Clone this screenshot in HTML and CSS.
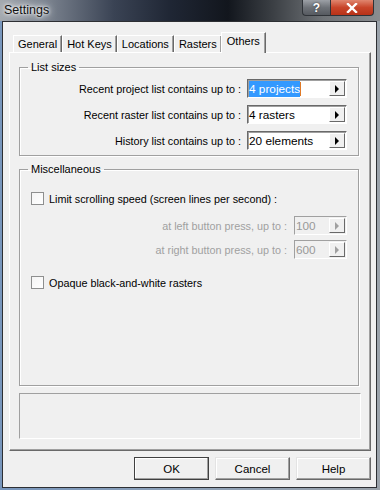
FILE: index.html
```html
<!DOCTYPE html>
<html lang="en">
<head>
  <meta charset="UTF-8">
  <title>Settings</title>
  <link rel="stylesheet" href="styles.css">
</head>
<body>
  <div class="window">
    <!-- Title bar -->
    <div class="titlebar">
      <span class="caption">Settings</span>
      <div class="caption-buttons">
        <span class="cap-btn help">?</span>
        <span class="cap-btn close">
          <svg width="12" height="10" viewBox="0 0 12 10"><path d="M2 1 L10 9 M10 1 L2 9" stroke="#fff" stroke-width="2.4" stroke-linecap="square"/></svg>
        </span>
      </div>
    </div>

    <div class="client">
      <!-- Tabs -->
      <div class="tabs">
        <span class="tab">General</span>
        <span class="tab">Hot Keys</span>
        <span class="tab">Locations</span>
        <span class="tab">Rasters</span>
        <span class="tab active">Others</span>
      </div>

      <div class="panel">
        <fieldset class="group sizes">
          <legend>List sizes</legend>
          <div class="row">
            <span class="label">Recent project list contains up to :</span>
            <div class="spin">
              <span class="value"><span class="selected">4 projects</span><span class="caret"></span></span>
              <span class="arrow"></span>
            </div>
          </div>
          <div class="row">
            <span class="label">Recent raster list contains up to :</span>
            <div class="spin">
              <span class="value">4 rasters</span>
              <span class="arrow"></span>
            </div>
          </div>
          <div class="row">
            <span class="label">History list contains up to :</span>
            <div class="spin">
              <span class="value">20 elements</span>
              <span class="arrow"></span>
            </div>
          </div>
        </fieldset>

        <fieldset class="group misc">
          <legend>Miscellaneous</legend>
          <div class="check">
            <span class="box"></span>
            <span>Limit scrolling speed (screen lines per second) :</span>
          </div>
          <div class="row sub disabled">
            <span class="label">at left button press, up to :</span>
            <div class="spin small">
              <span class="value">100</span>
              <span class="arrow"></span>
            </div>
          </div>
          <div class="row sub disabled">
            <span class="label">at right button press, up to :</span>
            <div class="spin small">
              <span class="value">600</span>
              <span class="arrow"></span>
            </div>
          </div>
          <div class="check last">
            <span class="box"></span>
            <span>Opaque black-and-white rasters</span>
          </div>
        </fieldset>

        <div class="infobox"></div>
      </div>

      <!-- Dialog buttons -->
      <div class="buttons">
        <button class="btn default">OK</button>
        <button class="btn">Cancel</button>
        <button class="btn">Help</button>
      </div>
    </div>
  </div>
</body>
</html>
```

FILE: styles.css
```css
/* General */
* {
  box-sizing: border-box;
}

body {
  margin: 0;
  width: 380px;
  height: 490px;
  overflow: hidden;
  font-family: "Liberation Sans", Arial, sans-serif;
  font-size: 10.8px;
  color: #000;
}

.window {
  height: 490px;
  display: flex;
  flex-direction: column;
  background: linear-gradient(90deg, #7896bc 0%, #8fa2b8 50%, #9aa2aa 100%);
}

/* Title bar */
.titlebar {
  height: 22px;
  display: flex;
  align-items: flex-start;
  padding-left: 4px;
  background: linear-gradient(90deg, #a3a8ae 0%, #7c8490 12%, #3a4354 30%, #1f2634 45%, #12161d 60%, #3c4045 72%, #6e7276 85%, #8a8d90 100%);
}

.caption {
  font-size: 12.5px;
  margin-top: 3px;
  color: #111;
  text-shadow: 0 0 6px #fff, 0 0 3px #fff, 0 0 10px #dfe3e8;
}

.caption-buttons {
  margin-left: auto;
  margin-right: 6px;
  display: flex;
}

.cap-btn {
  height: 16px;
  display: flex;
  align-items: center;
  justify-content: center;
  border: 1px solid #2f3338;
  border-top: none;
  color: #fff;
  font-weight: bold;
  font-size: 12px;
}

.cap-btn.help {
  width: 28px;
  border-right: none;
  border-bottom-left-radius: 4px;
  background: linear-gradient(#9ca0a6, #6e7278 50%, #565a60);
  text-shadow: 0 0 2px #333;
}

.cap-btn.close {
  width: 44px;
  border-bottom-right-radius: 4px;
  background: linear-gradient(#e0866f, #c8452a 50%, #b83218);
}

/* Client area */
.client {
  flex: 1;
  margin: 0 3px 2px 2px;
  border: 1px solid #2d2f33;
  background: #f0f0f0;
  padding: 9px 5px 7px 6px;
  display: flex;
  flex-direction: column;
}

.tabs {
  display: flex;
  align-items: flex-end;
  padding-left: 4px;
  height: 21px;
  position: relative;
  z-index: 1;
}

.tab {
  height: 17px;
  line-height: 16px;
  padding: 0 4px;
  font-size: 11px;
  border-top: 1px solid #fff;
  border-left: 1px solid #fff;
  border-right: 1px solid #696969;
  box-shadow: inset -1px 0 0 #a0a0a0;
  background: #f0f0f0;
}

.tab.active {
  height: 21px;
  line-height: 17px;
  margin: 0 -2px -1px -1px;
  padding: 0 5px;
}

.panel {
  height: 399px;
  border: 1px solid;
  border-color: #fff #696969 #696969 #fff;
  box-shadow: inset -1px -1px 0 #a0a0a0;
  padding: 8px 9px 11px 9px;
  display: flex;
  flex-direction: column;
}

/* Group boxes */
.group {
  margin: 0 2px 0 0;
  padding: 5px 11px 5px 8px;
  border: 1px solid #a0a0a0;
  box-shadow: inset 1px 1px 0 #fff, 1px 1px 0 #fff;
}

.group legend {
  padding: 0 3px;
  line-height: 13px;
  font-size: 11px;
}

.misc {
  margin-top: 7px;
  margin-bottom: 7px;
  flex: 1;
  padding-top: 14px;
}

.row {
  display: flex;
  justify-content: flex-end;
  align-items: center;
  gap: 6px;
  height: 19px;
  margin-bottom: 7px;
}

.row:last-child {
  margin-bottom: 0;
}

.spin {
  width: 100px;
  height: 19px;
  display: flex;
  background: #fff;
  border: 1px solid;
  border-color: #696969 #fff #fff #696969;
  box-shadow: inset 1px 1px 0 #a0a0a0;
}

.spin.small {
  width: 53px;
}

.value {
  flex: 1;
  display: flex;
  align-items: center;
  padding-left: 1px;
  font-size: 11.8px;
}

.selected {
  background: #3399ff;
  color: #fff;
  padding: 1px 0;
}

.caret {
  width: 1px;
  height: 14px;
  background: #e07a28;
}

.arrow {
  width: 16px;
  margin: 1px 1px 1px 0;
  background: #f0f0f0;
  border: 1px solid;
  border-color: #fff #696969 #696969 #fff;
  display: flex;
  align-items: center;
  justify-content: center;
}

.arrow::before {
  content: "";
  border-left: 4px solid #000;
  border-top: 4px solid transparent;
  border-bottom: 4px solid transparent;
}

/* Disabled rows */
.sub {
  gap: 7px;
  margin-bottom: 5px;
}

.disabled .label {
  color: #a0a0a0;
}

.disabled .spin {
  background: #f0f0f0;
  border-color: #a0a0a0 #fff #fff #a0a0a0;
  box-shadow: none;
}

.disabled .value {
  color: #999;
}

.disabled .arrow::before {
  border-left-color: #a0a0a0;
}

/* Check boxes */
.check {
  display: flex;
  align-items: center;
  gap: 5px;
  height: 15px;
  margin-left: 3px;
  margin-bottom: 10px;
  margin-top: 1px;
}

.check.last {
  margin-top: 16px;
}

.box {
  width: 13px;
  height: 13px;
  border: 1px solid #8e8f8f;
  background: linear-gradient(135deg, #f4f4f4, #fff);
}

.infobox {
  height: 46px;
  border: 1px solid;
  border-color: #a0a0a0 #fff #fff #a0a0a0;
}

/* Dialog buttons */
.buttons {
  display: flex;
  justify-content: flex-end;
  gap: 6px;
  margin-top: 6px;
}

.btn {
  width: 75px;
  height: 23px;
  font-family: inherit;
  font-size: 11.5px;
  background: #f0f0f0;
  border: 1px solid;
  border-color: #e3e3e3 #696969 #696969 #e3e3e3;
  box-shadow: inset -1px -1px 0 #a0a0a0, inset 1px 1px 0 #fff;
  padding: 0;
}

.btn.default {
  border: 1px solid #404040;
}
```
